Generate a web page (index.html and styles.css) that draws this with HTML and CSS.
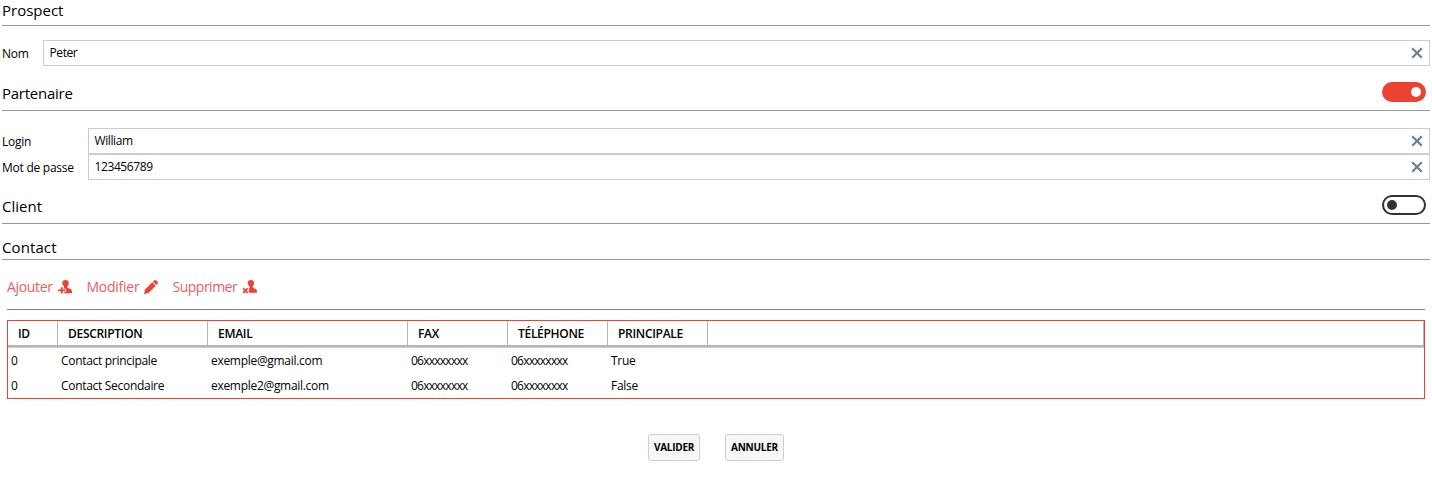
FILE: index.html
```html
<!DOCTYPE html>
<html lang="fr">
<head>
<meta charset="utf-8">
<title>Prospect</title>
<link rel="stylesheet" href="styles.css">
</head>
<body>
<main class="page">
  <header class="section prospect"><h2>Prospect</h2></header>
  <div class="field nom">
    <label>Nom</label>
    <div class="input"><span>Peter</span><svg class="clear" viewBox="0 0 12 12"><path d="M1.2 1.2 10.8 10.8M10.8 1.2 1.2 10.8"/></svg></div>
  </div>

  <header class="section partenaire"><h2>Partenaire</h2><span class="toggle on"></span></header>
  <div class="group">
    <div class="field">
      <label>Login</label>
      <div class="input"><span>William</span><svg class="clear" viewBox="0 0 12 12"><path d="M1.2 1.2 10.8 10.8M10.8 1.2 1.2 10.8"/></svg></div>
    </div>
    <div class="field">
      <label>Mot de passe</label>
      <div class="input"><span>123456789</span><svg class="clear" viewBox="0 0 12 12"><path d="M1.2 1.2 10.8 10.8M10.8 1.2 1.2 10.8"/></svg></div>
    </div>
  </div>

  <header class="section client"><h2>Client</h2><span class="toggle"></span></header>
  <header class="section contact"><h2>Contact</h2></header>

  <nav class="toolbar">
    <a class="tool add"><span>Ajouter</span>
      <svg viewBox="0 0 14 14"><path d="M7.5 0C9.8 0 10.9 1.3 10.8 3.2 10.7 4.8 10 5.5 9.5 6.2V7.8L12.9 9.3C13.8 9.8 14 11 14 13.2H6.2V11.9H8.1V8.7H5.8V7.9L6 7.7V6.2C5.1 5.2 4.4 4.5 4.3 3.2 4.2 1.2 5.5 0 7.5 0Z"/><path d="M2.8 7.3H4.7V9.4H7.3V11.2H4.7V13.6H2.8V11.2H0V9.4H2.8Z"/></svg></a>
    <a class="tool edit"><span>Modifier</span>
      <svg viewBox="0 0 14 14"><path d="M0 14 1 9.6 8.2 2.2 11.8 5.8 4.4 13ZM9 1.5 10.4.2Q11.1-.3 11.8.2L13.8 2.2Q14.3 2.9 13.8 3.6L12.5 5Z"/></svg></a>
    <a class="tool remove"><span>Supprimer</span>
      <svg viewBox="0 0 14 14"><path d="M7.8 0C10.1 0 11.2 1.3 11.1 3.2 11 4.8 10.3 5.5 9.8 6.2V7.8L13.1 9.3C13.8 9.8 14 11 14 12.8H6.3L5.4 10.9 6.6 9.2 5.4 8.4 6.5 7.8V6.2C5.4 5.2 4.8 4.5 4.7 3.2 4.6 1.2 5.8 0 7.8 0Z"/><path class="cross" d="M.2 8.4 4.6 12.8M4.6 8.4.2 12.8"/></svg></a>
  </nav>

  <table class="grid">
    <thead><tr><th class="id">ID</th><th class="desc">DESCRIPTION</th><th class="mail">EMAIL</th><th class="fax">FAX</th><th class="tel">TÉLÉPHONE</th><th class="main">PRINCIPALE</th><th></th></tr></thead>
    <tbody>
      <tr><td>0</td><td>Contact principale</td><td>exemple@gmail.com</td><td class="phone">06xxxxxxxx</td><td class="phone">06xxxxxxxx</td><td>True</td><td></td></tr>
      <tr><td>0</td><td>Contact Secondaire</td><td>exemple2@gmail.com</td><td class="phone">06xxxxxxxx</td><td class="phone">06xxxxxxxx</td><td>False</td><td></td></tr>
    </tbody>
  </table>

  <footer class="actions"><button class="ok">VALIDER</button><button class="cancel">ANNULER</button></footer>
</main>
</body>
</html>
```
FILE: styles.css
```css
* { box-sizing: border-box; }
body {
  margin: 0;
  background: #fff;
  color: #000;
  font: 12px/16px "Open Sans", "Noto Sans", sans-serif;
  letter-spacing: -0.3px;
}
.page { width: 1432px; height: 504px; padding: 0 2px; overflow: hidden; }

.section {
  display: flex;
  justify-content: space-between;
  align-items: flex-end;
  border-bottom: 1px solid #999;
}
.section h2 { margin: 0; font-size: 15px; line-height: 20px; font-weight: 400; letter-spacing: 0; }
.prospect { height: 26px; padding-bottom: 5px; }
.partenaire { height: 45px; padding-bottom: 7px; }
.partenaire h2 { letter-spacing: -0.25px; }
.client { height: 44px; padding-bottom: 7px; }
.contact { height: 36px; padding-bottom: 2px; }
.contact h2 { letter-spacing: 0.1px; }

.toggle {
  display: flex;
  align-items: center;
  width: 44px;
  height: 20px;
  margin: 0 4px 1px 0;
  padding: 0 3px;
  border: 2px solid #333;
  border-radius: 10px;
}
.toggle::before { content: ""; width: 10px; height: 10px; border-radius: 50%; background: #333; }
.toggle.on { justify-content: flex-end; border-color: #ea4333; background: #ea4333; }
.toggle.on::before { background: #fff; }

.field { display: flex; height: 26px; }
.field label { width: 86px; padding-top: 6px; letter-spacing: -0.25px; }
.nom { margin-top: 14px; }
.nom label { width: 41px; }
.group { margin-top: 17px; }
.input {
  flex: 1;
  display: flex;
  justify-content: space-between;
  align-items: center;
  padding: 0 6px 0 5.5px;
  border: 1px solid #ccc;
  letter-spacing: -0.4px;
}
.clear { width: 12px; height: 12px; margin-top: -1px; fill: none; stroke: #688294; stroke-width: 2.2; }

.toolbar {
  display: flex;
  height: 50px;
  margin: 0 5px;
  padding-top: 17px;
  border-bottom: 1px solid #808080;
}
.tool { display: flex; color: #e8605f; font-size: 14px; line-height: 20px; letter-spacing: -0.35px; }
.tool svg { width: 14px; height: 14px; margin-top: 3px; fill: #ea4333; overflow: visible; }
.tool .cross { fill: none; stroke: #ea4333; stroke-width: 1.8; }
.tool span { white-space: nowrap; }
.add { width: 79.5px; }
.add span { width: 50.5px; }
.edit { width: 86px; letter-spacing: -0.25px; }
.edit span { width: 57.5px; }
.remove { letter-spacing: -0.5px; }
.remove span { width: 70px; }

.grid {
  width: 1418px;
  margin: 10px 5px 0;
  table-layout: fixed;
  border-collapse: separate;
  border-spacing: 0;
  border: 1px solid #ea4333;
}
.grid th {
  height: 27px;
  padding: 0 0 1px 10px;
  text-align: left;
  font-weight: 600;
  letter-spacing: -0.3px;
  border-right: 1px solid #b5b5b5;
  border-bottom: 1px solid #ccc;
  box-shadow: inset 0 -2px #b5b5b5;
}
.grid td { height: 25px; padding: 0 0 0 3px; white-space: nowrap; }
.grid .phone { letter-spacing: -0.75px; }
.grid .id { width: 50px; }
.grid .desc { width: 150px; }
.grid .mail { width: 200px; }
.grid .fax, .grid .tel, .grid .main { width: 100px; }

.actions { display: flex; justify-content: center; gap: 25px; margin-top: 35px; }
.actions button {
  width: 52px;
  height: 27px;
  padding: 0 0 2px;
  border: 1px solid #ccc;
  border-radius: 3px;
  background: #f7f7f7;
  color: #000;
  font: 700 10px/14px "Open Sans", sans-serif;
  letter-spacing: -0.25px;
}
.actions .cancel { width: 59px; }
```
